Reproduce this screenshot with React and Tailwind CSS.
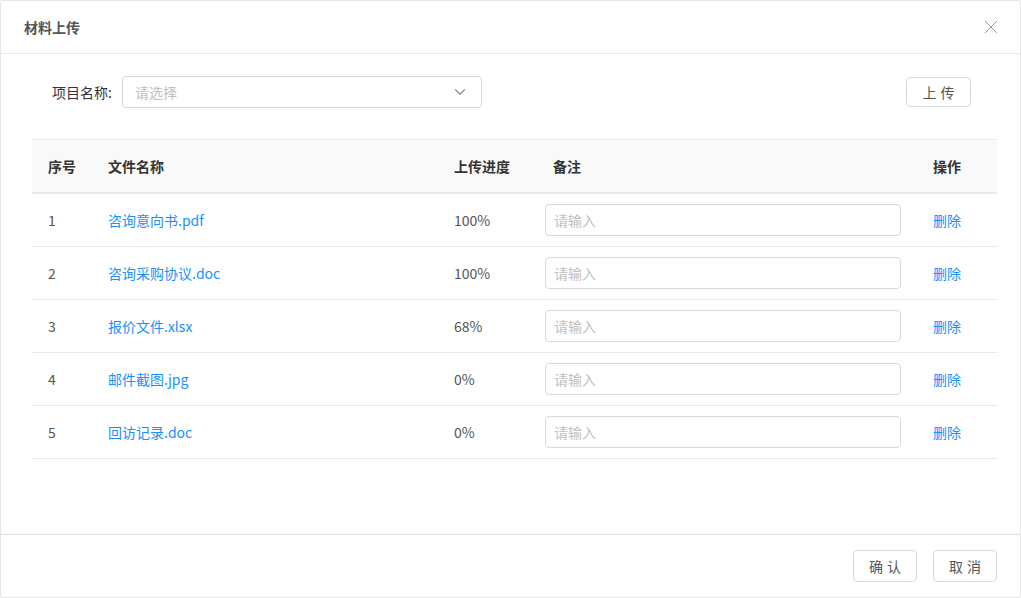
import { ChevronDown } from 'lucide-react';

const rows = [
    { no: 1, name: '咨询意向书.pdf', progress: '100%' },
    { no: 2, name: '咨询采购协议.doc', progress: '100%' },
    { no: 3, name: '报价文件.xlsx', progress: '68%' },
    { no: 4, name: '邮件截图.jpg', progress: '0%' },
    { no: 5, name: '回访记录.doc', progress: '0%' },
];

const cols = 'grid grid-cols-[60px_346px_99px_380px_1fr]';

const App = () => {
    return (
        <div
            className="w-[1021px] h-[598px] bg-white text-[14px] text-[#555]"
            style={{ fontFamily: '"Noto Sans CJK SC", "Noto Sans", sans-serif' }}
        >
            <div className="h-full flex flex-col border border-[#e6e6e6] rounded-[2px]">
                {/* header */}
                <div className="h-[53px] shrink-0 flex items-center justify-between pl-[23px] pr-[22px] border-b border-[#e8e8e8]">
                    <span className="text-[14px] font-bold text-[#555]">材料上传</span>
                    <svg width="14" height="14" viewBox="0 0 14 14" className="text-[#999]">
                        <path d="M1 1L13 13M13 1L1 13" stroke="currentColor" strokeWidth="1" fill="none" />
                    </svg>
                </div>

                {/* body */}
                <div className="flex-1 pl-[31px] pr-[23px] pt-[22px]">
                    <div className="flex items-center justify-between">
                        <div className="flex items-center">
                            <span className="ml-[20px] mr-[10px] text-[#333]">项目名称:</span>
                            <div className="w-[360px] h-[32px] border border-[#d9d9d9] rounded-[4px] flex items-center justify-between pl-[12px] pr-[12px]">
                                <span className="text-[#bfbfbf]">请选择</span>
                                <ChevronDown size={18} strokeWidth={1.5} className="text-[#888]" />
                            </div>
                        </div>
                        <button className="mr-[26px] w-[65px] h-[30px] border border-[#d9d9d9] rounded-[4px] text-[#555] tracking-[4px] pl-[4px]">
                            上传
                        </button>
                    </div>

                    <div className="mt-[31px] border-t border-[#e8e8e8]">
                        <div className={`${cols} h-[54px] items-center bg-[#f9f9f9] border-b-2 border-[#e8e8e8] font-bold text-[#333]`}>
                            <div className="pl-[16px]">序号</div>
                            <div className="pl-[16px]">文件名称</div>
                            <div className="pl-[16px]">上传进度</div>
                            <div className="pl-[16px]">备注</div>
                            <div className="pl-[16px]">操作</div>
                        </div>
                        {rows.map((r) => (
                            <div key={r.no} className={`${cols} h-[53px] items-center border-b border-[#e8e8e8]`}>
                                <div className="pl-[16px]">{r.no}</div>
                                <div className="pl-[16px] text-[#1890ff]">{r.name}</div>
                                <div className="pl-[16px]">{r.progress}</div>
                                <div className="pl-[8px] pr-[16px]">
                                    <div className="h-[32px] border border-[#d9d9d9] rounded-[4px] flex items-center pl-[8px] text-[#bfbfbf]">
                                        请输入
                                    </div>
                                </div>
                                <div className="pl-[16px] text-[#1890ff]">删除</div>
                            </div>
                        ))}
                    </div>
                </div>

                {/* footer */}
                <div className="h-[63px] shrink-0 border-t border-[#e0e0e0] flex items-center justify-end gap-[16px] pr-[23px]">
                    <button className="w-[64px] h-[32px] border border-[#d9d9d9] rounded-[4px] text-[#555] tracking-[4px] pl-[4px]">
                        确认
                    </button>
                    <button className="w-[64px] h-[32px] border border-[#d9d9d9] rounded-[4px] text-[#555] tracking-[4px] pl-[4px]">
                        取消
                    </button>
                </div>
            </div>
        </div>
    );
};

export default App;
